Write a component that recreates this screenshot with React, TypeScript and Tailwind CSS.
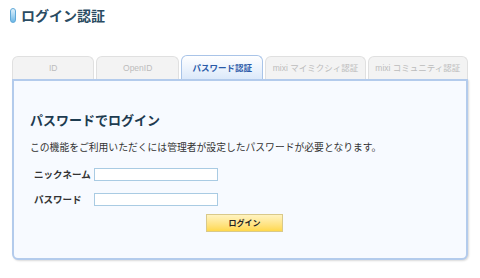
const tabs = [
  { label: "ID", w: "w-[83px]" },
  { label: "OpenID", w: "w-[83px]" },
  { label: "パスワード認証", w: "w-[83px]", active: true },
  { label: "mixi マイミクシィ認証", w: "w-[101px]" },
  { label: "mixi コミュニティ認証", w: "w-[101px]" },
];

export default function App() {
  return (
    <div className="h-[278px] w-[480px] bg-white font-['Noto_Sans_CJK_JP',sans-serif]">
      <div className="flex items-center gap-[5px] pl-[10px] pt-[7px]">
        <span className="h-[15px] w-[6px] rounded-full border border-[#5fa8d8] bg-gradient-to-b from-[#dff1fb] to-[#6cb8e6]" />
        <h1 className="text-[14px] font-bold leading-[16px] text-[#2a4b62]">ログイン認証</h1>
      </div>

      <div className="mt-[32px] px-[12px]">
        <div className="flex gap-[2px]">
          {tabs.map((t) =>
            t.active ? (
              <div
                key={t.label}
                className={`${t.w} flex h-[24px] items-center justify-center rounded-t-[6px] border border-b-0 border-[#a9c4e8] bg-gradient-to-b from-white to-[#dce9fa] text-[8.5px] font-bold text-[#2a5aa8]`}
              >
                {t.label}
              </div>
            ) : (
              <div
                key={t.label}
                className={`${t.w} flex h-[23px] items-center justify-center self-end rounded-t-[6px] border border-b-0 border-[#e0e0e0] bg-[#f3f3f3] font-['Liberation_Sans','Noto_Sans_CJK_JP',sans-serif] text-[8.5px] text-[#bcbcbc]`}
              >
                {t.label}
              </div>
            )
          )}
        </div>
        <div className="h-[181px] rounded-b-[6px] border-2 border-[#b3cbec] bg-[#f7faff] shadow-[1px_1px_2px_rgba(0,0,0,0.15)]">
          <div className="px-[16px] pt-[31px]">
            <h2 className="text-[13px] font-bold leading-[16px] text-[#1d3b50]">パスワードでログイン</h2>
            <p className="mt-[13px] text-[9.8px] leading-[13px] text-[#333]">
              この機能をご利用いただくには管理者が設定したパスワードが必要となります。
            </p>
            <div className="mt-[14px] flex items-center pl-[4px]">
              <span className="w-[60px] text-[9.5px] font-bold leading-[13px] text-[#333]">ニックネーム</span>
              <input className="h-[13px] w-[124px] border border-[#a9cbe3] bg-white" />
            </div>
            <div className="mt-[12px] flex items-center pl-[4px]">
              <span className="w-[60px] text-[9.5px] font-bold leading-[13px] text-[#333]">パスワード</span>
              <input className="h-[13px] w-[124px] border border-[#a9cbe3] bg-white" />
            </div>
            <div className="mt-[8px] flex pl-[176px]">
              <button className="h-[18px] w-[77px] border border-[#d9c98a] bg-gradient-to-b from-[#fff3c0] to-[#ffd84a] text-[8px] font-bold leading-[16px] text-[#222]">
                ログイン
              </button>
            </div>
          </div>
        </div>
      </div>
    </div>
  );
}
